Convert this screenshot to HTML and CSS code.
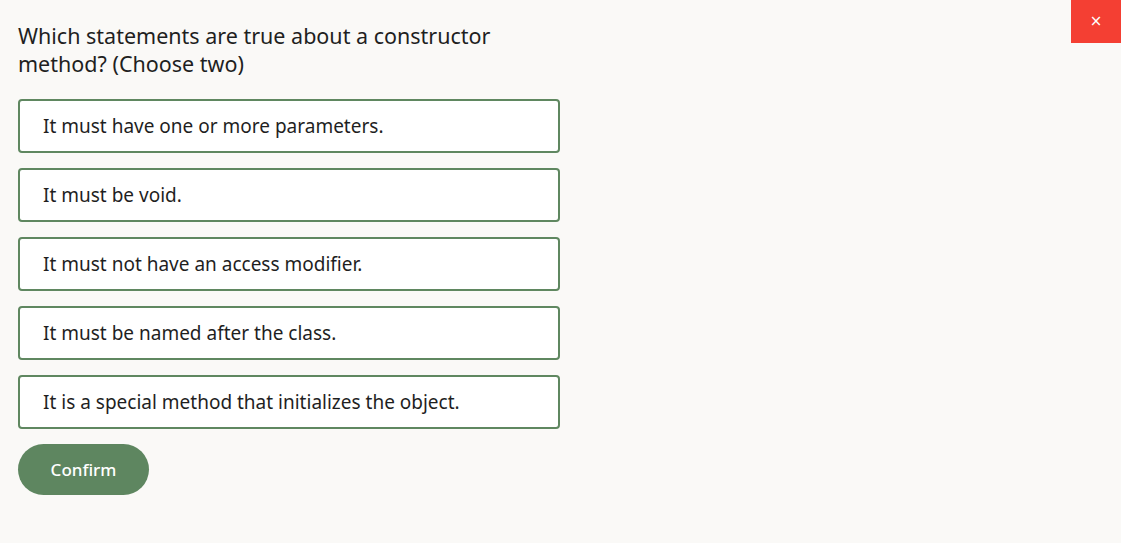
FILE: index.html
```html
<!DOCTYPE html>
<html>
<head>
<meta charset="utf-8">
<link rel="stylesheet" href="styles.css">
</head>
<body>
<button class="close" aria-label="Close">×</button>
<main class="quiz">
  <h1 class="question">Which statements are true about a constructor method? (Choose two)</h1>
  <div class="options">
    <div class="option">It must have one or more parameters.</div>
    <div class="option">It must be void.</div>
    <div class="option">It must not have an access modifier.</div>
    <div class="option">It must be named after the class.</div>
    <div class="option">It is a special method that initializes the object.</div>
  </div>
  <button class="confirm">Confirm</button>
</main>
</body>
</html>
```
FILE: styles.css
```css
html, body {
  margin: 0;
  padding: 0;
  background: #faf9f7;
  font-family: "Noto Sans", "Open Sans", sans-serif;
  color: #1f1f1f;
}
body {
  width: 1121px;
  height: 543px;
  overflow: hidden;
  position: relative;
}
.close {
  position: absolute;
  top: 0;
  right: 0;
  width: 50px;
  height: 43px;
  border: none;
  background: #f43f33;
  color: #fff;
  font-size: 15px;
  line-height: 1;
  padding: 0;
  font-family: "DejaVu Sans", sans-serif;
}
.quiz {
  padding: 22px 0 0 18px;
  width: 542px;
}
.question {
  margin: 0;
  font-weight: 400;
  font-size: 21.5px;
  line-height: 28px;
  max-width: 495px;
}
.options {
  margin-top: 21px;
  display: flex;
  flex-direction: column;
  gap: 15px;
}
.option {
  box-sizing: border-box;
  height: 54px;
  border: 2px solid #5f8760;
  border-radius: 4px;
  background: #fff;
  padding: 0 23px;
  display: flex;
  align-items: center;
  font-size: 19px;
}
.confirm {
  margin-top: 15px;
  width: 131px;
  height: 51px;
  border: none;
  border-radius: 26px;
  background: #5e8660;
  color: #fff;
  font-family: inherit;
  font-weight: 500;
  font-size: 17px;
  padding: 0;
}
```
